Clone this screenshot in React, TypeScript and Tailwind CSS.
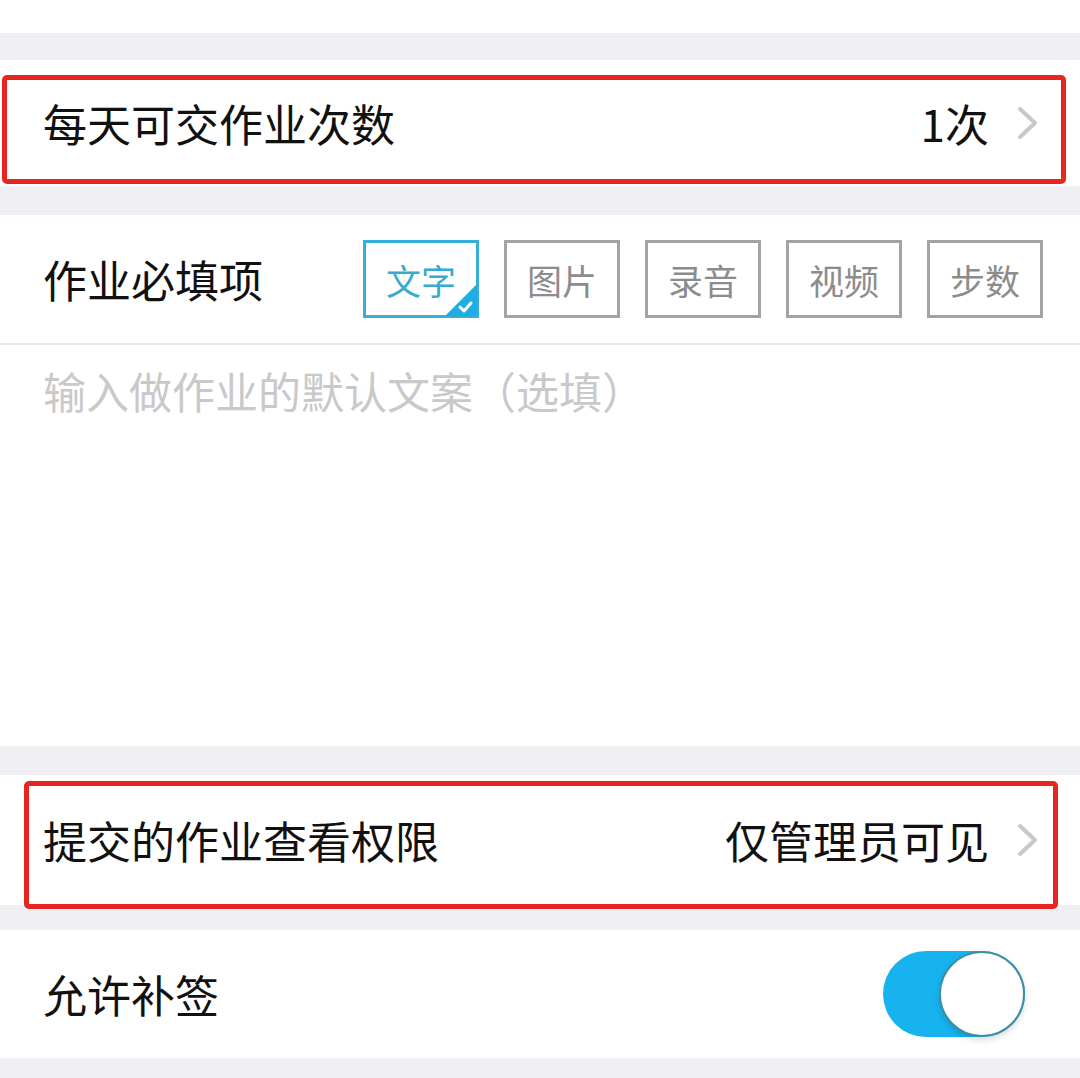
import React from "react";

const font = { fontFamily: '"Noto Sans CJK SC", "Noto Sans", sans-serif' };

const Chevron = () => (
  <svg width="24" height="34" viewBox="0 0 24 34" className="shrink-0">
    <path d="M4 3 L19 17 L4 31" fill="none" stroke="#c7c7cc" strokeWidth="4" strokeLinecap="round" strokeLinejoin="round" />
  </svg>
);

const Gap = ({ h }: { h: string }) => <div className={`${h} bg-[#efeff4]`} />;

const tags = ["文字", "图片", "录音", "视频", "步数"];

export default function App() {
  return (
    <div className="w-[1080px] h-[1078px] bg-[#efeff4] flex flex-col overflow-hidden" style={font}>
      <div className="h-[33px] bg-white" />
      <Gap h="h-[27px]" />

      {/* 每天可交作业次数 */}
      <div className="relative h-[126px] bg-white flex items-center pl-[43px] pr-[40px]">
        <span className="text-[44px] leading-none text-[#111]">每天可交作业次数</span>
        <span className="ml-auto text-[44px] leading-none text-[#111] mr-[27px]">1次</span>
        <Chevron />
        <div className="absolute left-[2px] top-[15px] w-[1064px] h-[109px] border-[5px] border-[#e8261f] rounded-[5px]" />
      </div>
      <Gap h="h-[29px]" />

      {/* 作业必填项 */}
      <div className="h-[130px] bg-white flex items-center pl-[43px] pr-[37px] border-b-2 border-[#e6e6e6]">
        <span className="text-[44px] leading-none text-[#111]">作业必填项</span>
        <div className="ml-auto flex gap-[25px]">
          {tags.map((t, i) =>
            i === 0 ? (
              <div key={t} className="relative w-[116px] h-[78px] border-[3px] border-[#35afd9] flex items-center justify-center">
                <span className="text-[35px] leading-none text-[#36abd0]">{t}</span>
                <svg width="32" height="32" viewBox="0 0 32 32" className="absolute right-[-1px] bottom-[-1px]">
                  <polygon points="32,0 32,32 0,32" fill="#1eaee6" />
                  <path d="M15 23 L19 27 L26 19" fill="none" stroke="#fff" strokeWidth="3" strokeLinecap="round" strokeLinejoin="round" />
                </svg>
              </div>
            ) : (
              <div key={t} className="w-[116px] h-[78px] border-[3px] border-[#a3a3a3] flex items-center justify-center">
                <span className="text-[35px] leading-none text-[#8c8c8c]">{t}</span>
              </div>
            )
          )}
        </div>
      </div>

      {/* textarea */}
      <div className="h-[401px] bg-white pl-[43px] pt-[24px]">
        <span className="text-[43px] leading-none text-[#c9c9c9]">输入做作业的默认文案（选填）</span>
      </div>
      <Gap h="h-[29px]" />

      {/* 提交的作业查看权限 */}
      <div className="relative h-[130px] bg-white flex items-center pl-[43px] pr-[40px]">
        <span className="text-[44px] leading-none text-[#111]">提交的作业查看权限</span>
        <span className="ml-auto text-[44px] leading-none text-[#111] mr-[27px]">仅管理员可见</span>
        <Chevron />
        <div className="absolute left-[24px] top-[6px] w-[1034px] h-[128px] border-[5px] border-[#e8261f] rounded-[5px]" />
      </div>
      <Gap h="h-[25px]" />

      {/* 允许补签 */}
      <div className="h-[128px] bg-white flex items-center pl-[43px] pr-[55px]">
        <span className="text-[44px] leading-none text-[#111]">允许补签</span>
        <div className="ml-auto relative w-[142px] h-[86px] rounded-full bg-[#17b3ee]">
          <div className="absolute right-0 top-0 w-[86px] h-[86px] rounded-full bg-white border-2 border-[#3d8ea3] shadow-[0_3px_6px_rgba(0,0,0,0.15)]" />
        </div>
      </div>
      <Gap h="h-[20px]" />
    </div>
  );
}
